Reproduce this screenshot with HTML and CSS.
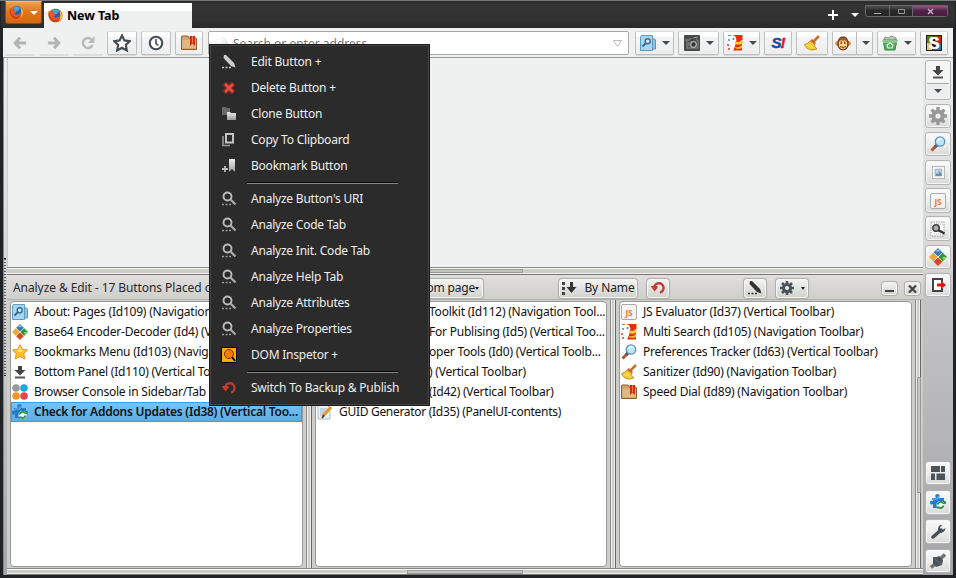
FILE: index.html
```
<!DOCTYPE html>
<html lang="en">
<head>
<meta charset="utf-8">
<title>New Tab</title>
<link rel="stylesheet" href="styles.css">
</head>
<body>
<svg class="defs" width="0" height="0">
<defs>
<linearGradient id="silver" x2="0" y2="1"><stop stop-color="#eee"/><stop offset="1" stop-color="#999"/></linearGradient>
<symbol id="firefox" viewBox="0 0 16 16"><circle cx="8" cy="8" r="7.5" fill="#e8721c"/><circle cx="8.5" cy="6.5" r="5.5" fill="#2560a8"/><path d="M5 2Q9 0 12 3L10 6 7 7 5 5Z" fill="#44a2dc"/><path d="M1 3 3 4 5 3 5 6 8 7 7 9 5 9Q8 12 12 9L14 5Q16 10 13 13 8 17 3 13-1 9 1 3" fill="#e95b1c"/><path d="M12 2Q17 7 14 12L12 13Q14 9 13 6Z" fill="#fbc23e"/><path d="M1 4Q2 10 5 12 9 14 12 11 11 16 5 14 0 11 1 4" fill="#c83a1d"/></symbol>
<symbol id="left" viewBox="0 0 16 16"><path d="M8 2 2.5 8 8 14M3 8H15" fill="none" stroke="#b3b5b5" stroke-width="3.4"/></symbol>
<symbol id="right" viewBox="0 0 16 16"><path d="M8 2 13.5 8 8 14M13 8H1" fill="none" stroke="#b3b5b5" stroke-width="3.4"/></symbol>
<symbol id="reload" viewBox="0 0 16 16"><path d="M11.5 4.5A5 5 0 1 0 12.5 10" fill="none" stroke="#b8b9b9" stroke-width="2.5"/><path d="M14.5 1V8H8Z" fill="#b8b9b9"/></symbol>
<symbol id="staro" viewBox="0 0 16 16"><path d="M8 1.2 10.1 5.7 15 6.3 11.4 9.7 12.3 14.6 8 12.2 3.7 14.6 4.6 9.7 1 6.3 5.9 5.7Z" fill="#fff" stroke="#454c52" stroke-width="1.9"/></symbol>
<symbol id="clock" viewBox="0 0 16 16"><circle cx="8" cy="8" r="6.2" fill="#fff" stroke="#454c52" stroke-width="2.1"/><path d="M8 4V8.5L10.5 10.5" fill="none" stroke="#454c52" stroke-width="1.6"/></symbol>
<symbol id="book" viewBox="0 0 16 16"><path d="M1 1H7L8 3H14Q15.500 3 15.500 4V14.500H.5V2Z" fill="#d4a66e" stroke="#8c5e30"/><path d="M1.500 5H15V13H1.500Z" fill="#dfb983"/><path d="M9 1H14V11L11.500 8.500 9 11Z" fill="#d52b0d"/><path d="M11.500 1V8" stroke="#ff7854"/></symbol>
<symbol id="pages" viewBox="0 0 16 16"><path d="M10 4H14.500Q15.500 4 15.500 6V14H5" fill="#8dc5e4" stroke="#5796bc"/><path d="M1.500.5H12.500V15.500H.5V2Z" fill="#a7d7ef" stroke="#5b9bc2"/><circle cx="7.700" cy="6.200" r="2.500" fill="#d5edf9" stroke="#366b94" stroke-width="1.400"/><path d="M6 8 2.500 11.500" stroke="#366b94" stroke-width="2"/></symbol>
<symbol id="camera" viewBox="0 0 16 16"><rect width="16" height="16" rx="1" fill="#484949"/><path d="M1 5H5L7 3M3 6V13H14V6L12 4" stroke="#7c7e7e" stroke-width="1.300" fill="none"/><circle cx="9.500" cy="9.500" r="2.800" fill="#333" stroke="#aeb0b0" stroke-width="1.300"/><path d="M9 3 14 2M5 7V11" fill="none" stroke="#999"/></symbol>
<symbol id="duck" viewBox="0 0 16 16"><path d="M6 0H15.500V5L13 6 15 8V15.500H5Z" fill="#e62d0c"/><path d="M0 1Q3-1 8 1Q10 4 9 7L8 11 6 16H3L4 11Q0 8 0 1" fill="#fff"/><path d="M8 6Q12 8 15.500 5.500L16 8Q13 11 8 9Z" fill="#ffce38"/><path d="M8 12Q12 13 15 10V13Q11 15 8 13Z" fill="#ffb32b"/><circle cx="2" cy="5" r=".9" fill="#198acb"/><circle cx="6.500" cy="4" r="1" fill="#198acb"/><path d="M1 0H4M0 10H2M1 14H3" stroke="#e63a1d" stroke-width="1.500"/></symbol>
<symbol id="broom" viewBox="0 0 16 16"><path d="M15 1 9.500 6.500" stroke="#bd7435" stroke-width="2.500"/><path d="M8 4 12 8 10 10 7 8 6 6Z" fill="#d65d35"/><path d="M6 6Q4 9 .5 9.500Q2 14.500 8 15L13 14Q10 12 10.500 9Z" fill="#f3ca32" stroke="#c5942c"/><path d="M3 10 6 12M6 9 9 13" stroke="#fff18a"/></symbol>
<symbol id="monkey" viewBox="0 0 16 16"><circle cx="2.500" cy="8.500" r="2.300" fill="#d98d3d"/><circle cx="13.500" cy="8.500" r="2.300" fill="#d98d3d"/><path d="M3 6Q5 1 8 2 11 1 13 6V11Q12 15 8 15 4 15 3 11Z" fill="#a85b22" stroke="#633519"/><path d="M4 7Q6 4 8 6 10 4 12 7V11Q11 14 8 14 5 14 4 11Z" fill="#ffd080"/><path d="M6.200 6.500V9M9.800 6.500V9" stroke="#38271b" stroke-width="1.100"/><path d="M5 11.500Q8 13.500 11 11.500" fill="none" stroke="#6f3e1e"/></symbol>
<symbol id="basket" viewBox="0 0 16 16"><path d="M2 6 3 2 7 3 9 1 14 3V7" fill="#c4cbc5" stroke="#838b86"/><path d="M1 5H15L13 15H3Z" fill="#58a962" stroke="#348c43"/><path d="M1 5H15V8H1Z" fill="#87c68c"/><path d="M6 13 5 10 8 8 11 10 10 13Z" fill="none" stroke="#e2f7e3" stroke-width="1.200"/></symbol>
<symbol id="stylish" viewBox="0 0 16 16"><path d="M0 0H16V16H0Z" fill="#202020"/><path d="M1 1H7V8H1Z" fill="#587e2b"/><path d="M9 1H15V8H9Z" fill="#b32c24"/><path d="M1 8H6V15H1Z" fill="#dec873"/><path d="M10 8H15V15H10Z" fill="#276e99"/></symbol>
<symbol id="bottom" viewBox="0 0 16 16"><path d="M6 2H10V6H13.500L8 11.500 2.500 6H6Z" fill="#444"/><path d="M3 13.500H13" stroke="#555" stroke-width="2"/></symbol>
<symbol id="gear" viewBox="0 0 16 16"><path d="M8 0V16M0 8H16M2.300 2.300 13.700 13.700M2.300 13.700 13.700 2.300" stroke="currentColor" stroke-width="3"/><circle cx="8" cy="8" r="4.200" fill="none" stroke="currentColor" stroke-width="3.300"/><circle cx="8" cy="8" r="2.300" fill="#eee"/></symbol>
<symbol id="lens" viewBox="0 0 16 16"><path d="M7 9 1.500 14.500" stroke="#b85327" stroke-width="3"/><path d="M7 9 5 11" stroke="#525779" stroke-width="3"/><circle cx="10" cy="5.500" r="4.700" fill="#b8e7fb" stroke="#5b91bd" stroke-width="1.300"/><path d="M7.500 5Q9 1.500 12 3" fill="none" stroke="#fff" stroke-width="1.500"/></symbol>
<symbol id="image" viewBox="0 0 16 16"><rect x=".5" y=".5" width="15" height="15" fill="#f6f6f6" stroke="#aaa"/><path d="M4 4H12V12H4Z" fill="#b1d8ec" stroke="#9da5aa"/><path d="M4 12 6 9 8 10 10 7 12 12Z" fill="#5189aa"/><path d="M8 6H10V9H8Z" fill="#dd8e62"/></symbol>
<symbol id="js" viewBox="0 0 16 16"><rect x=".5" y=".5" width="15" height="15" rx="1.500" fill="#f4f4f4" stroke="#aaa"/><text x="8" y="11.500" text-anchor="middle" font-family="Noto Sans" font-weight="700" font-size="8.500" fill="#ee7d12">JS</text></symbol>
<symbol id="scan" viewBox="0 0 16 16"><path d="M1 1H14V15H1Z" fill="#fff" stroke="#999" stroke-dasharray="1.500 1"/><path d="M4 3H13M4 13H13" stroke="#aaa" stroke-dasharray="1 1"/><circle cx="6" cy="7" r="3.300" fill="#aaa" stroke="#444" stroke-width="1.600"/><path d="M8 9 14.500 12.500" stroke="#333" stroke-width="2.500"/></symbol>
<symbol id="colors" viewBox="0 0 16 16"><path d="M8 0 12 4 8 8 4 4Z" fill="#3b78b7"/><path d="M12 4 16 8 12 12 8 8Z" fill="#2e9540"/><path d="M8 8 12 12 8 16 4 12Z" fill="#d9471a"/><path d="M4 4 8 8 4 12 0 8Z" fill="#edaa2f"/><path d="M4 4 12 12M12 4 4 12" stroke="#eee" stroke-width=".8"/><path d="M8 1 10 3H6Z" fill="#9dceeb"/><path d="M12 8H16L13 11Z" fill="#99d370"/></symbol>
<symbol id="exit" viewBox="0 0 16 16"><path d="M12 5V2H3V14H12V11" fill="#fff" stroke="#444" stroke-width="2"/><path d="M7 6.500H11V4L16 8 11 12V9.500H7Z" fill="#f20d0d"/></symbol>
<symbol id="tiles" viewBox="0 0 16 16"><path d="M1 1H10V7H1ZM11 1H15V7H11ZM1 8.500H5V15H1ZM6.500 8.500H15V15H6.500Z" fill="#4c5359"/></symbol>
<symbol id="puzzle" viewBox="0 0 16 16"><path d="M2 4H6Q4 1 7 0 11 0 9 4H14V7Q16 6 16 9 16 11 13 10V14H3V10Q0 12 0 8 0 6 3 7Z" fill="#247ccb"/><path d="M3 5H8V2" fill="none" stroke="#72b7e8"/><circle cx="10.500" cy="11" r="4" fill="#fff"/><path d="M7.500 10.500A3.200 3.200 0 0 1 13 9M13.500 11.500A3.200 3.200 0 0 1 8 13" fill="none" stroke="#21953a" stroke-width="1.800"/><path d="M12 10H15V7ZM10 12.500H7V15Z" fill="#259c3a"/></symbol>
<symbol id="wrench" viewBox="0 0 16 16"><path d="M11 6 3 13" stroke="#454d54" stroke-width="3.500" stroke-linecap="round"/><path d="M10 1Q7 4 8.500 7L11 9Q15 8 15.500 4L12.500 6 10.500 5.500 10 3.500 12 1Z" fill="#454d54"/></symbol>
<symbol id="plug" viewBox="0 0 16 16"><path d="M1 14.500 5.500 10.500M10 6 15 1.500" stroke="#6c7378" stroke-width="3.500"/><path d="M3 4 7 4 9 3 13 7 12 12 9 13 6 14 3 10Z" fill="#495159"/><path d="M4 5 12 12" stroke="#70787e"/></symbol>
<symbol id="star" viewBox="0 0 16 16"><path d="M8 .7 10.300 5.300 15.500 6 11.800 9.700 12.700 15 8 12.500 3.300 15 4.200 9.700.5 6 5.700 5.300Z" fill="#ffc12b" stroke="#e89027"/><path d="M8 2 9.500 6 13.500 7 8 8 3 7 6.500 6Z" fill="#ffe272"/></symbol>
<symbol id="dots" viewBox="0 0 16 16"><circle cx="4" cy="4" r="3.800" fill="#999"/><circle cx="12" cy="4" r="3.800" fill="#19a9dc"/><circle cx="4" cy="12" r="3.800" fill="#f39625"/><circle cx="12" cy="12" r="3.800" fill="#e64455"/></symbol>
<symbol id="note" viewBox="0 0 16 16"><path d="M1 1H10L13 4V15H1Z" fill="#e9f2f9" stroke="#a5bdd2"/><path d="M3 5H10M3 7H10M3 9H9M3 11H7" stroke="#9cb1c3"/><path d="M14 3 6 12" stroke="#e29a25" stroke-width="3"/><path d="M7 11 5 14" stroke="#4e4432" stroke-width="2"/></symbol>
<symbol id="pencil" viewBox="0 0 16 16"><path d="M3 1 5 1 13 9 14.500 13.500 10 12 2.500 4Z" fill="currentColor"/><path d="M1 13.500H3M4.500 13.500H6.500M8 13.500H10" stroke="currentColor" stroke-width="1.500"/></symbol>
<symbol id="delete" viewBox="0 0 16 16"><path d="M3.500 3.500 12.500 12.500M12.500 3.500 3.500 12.500" stroke="#8f2b24" stroke-width="4.600"/><path d="M4 4 12 12M12 4 4 12" stroke="#e64b3f" stroke-width="2.500"/></symbol>
<symbol id="clone" viewBox="0 0 16 16"><path d="M1 1H5L6 2H9V9H1Z" fill="#696969"/><path d="M6 6H9L10 7H15V14H6Z" fill="url(#silver)"/></symbol>
<symbol id="copy" viewBox="0 0 16 16"><path d="M5 2H12V10.500H5Z" fill="none" stroke="#c4c4c4" stroke-width="2"/><path d="M2 4V13.500H9" fill="none" stroke="#999" stroke-width="1.600"/></symbol>
<symbol id="bookmark" viewBox="0 0 16 16"><path d="M8 1H14V14L11 11 8 14Z" fill="url(#silver)"/><path d="M1 11H7M4 8V14" stroke="#bbb" stroke-width="1.800"/></symbol>
<symbol id="analyze" viewBox="0 0 16 16"><circle cx="6.500" cy="5.500" r="4" fill="none" stroke="#bbb" stroke-width="1.900"/><path d="M9.500 8.500 14.500 13.500" stroke="#aaa" stroke-width="2.300"/><path d="M1 13.500H3M4.500 13.500H6.500M8 13.500H10" stroke="#999" stroke-width="1.400"/></symbol>
<symbol id="dom" viewBox="0 0 16 16"><path d="M.5.500H15.500V15.500H.5Z" fill="#ffad00" stroke="#000"/><circle cx="8" cy="7" r="4.500" fill="#ff7800" stroke="#743500"/><path d="M11 10 14 14" stroke="#000" stroke-width="2"/></symbol>
<symbol id="undo" viewBox="0 0 16 16"><path d="M4.200 7.500A4.700 4.700 0 1 1 10 12.500" fill="none" stroke="#b93c2e" stroke-width="2.400"/><path d="M.5 6H7.500V8L4.500 11.500Z" fill="#cd3b2b"/></symbol>
<symbol id="sort" viewBox="0 0 18 16"><path d="M1 2H4V5H1ZM1 7H4V10H1ZM1 12H4V15H1Z" fill="#444"/><path d="M9 2H12V7H15.500L10.500 13 5.500 7H9Z" fill="#333"/></symbol>
</defs></svg>
<div class="window">
<header class="titlebar">
  <button class="app"><svg class="i15"><use href="#firefox"/></svg><i class="caret white"></i></button>
  <div class="tab"><svg class="i15"><use href="#firefox"/></svg><b>New Tab</b></div>
  <div class="newtab"><svg width="12" height="12"><path d="M6 1V11M1 6H11" stroke="#fff" stroke-width="2"/></svg></div>
  <i class="caret white tabs"></i>
  <div class="controls"><span><svg width="7" height="7"><path d="M0 5.500H7" stroke="#aaa"/></svg></span><span><svg width="7" height="7"><path d="M.5 1.500H6.500V5.500H.5Z" fill="none" stroke="#999" /></svg></span><span class="close"><svg width="7" height="7"><path d="M1 1 6 6M6 1 1 6" stroke="#c5b4be" stroke-width="1.400"/></svg></span></div>
</header>
<nav class="nav">
  <button class="tb flat back"><svg><use href="#left"/></svg></button>
  <button class="tb flat fwd"><svg><use href="#right"/></svg></button>
  <button class="tb flat rel"><svg><use href="#reload"/></svg></button>
  <button class="tb w30"><svg class="i17"><use href="#staro"/></svg></button>
  <button class="tb w30"><svg><use href="#clock"/></svg></button>
  <button class="tb w28"><svg><use href="#book"/></svg></button>
  <div class="url"><i class="globe"></i><span>Search or enter address</span><svg class="drop" width="9" height="8"><path d="M.5.500H8.500L4.500 6.500Z" fill="#fff" stroke="#bbb"/></svg></div>
  <button class="tb m6 w39"><svg><use href="#pages"/></svg><i class="caret"></i></button>
  <button class="tb m4 w41"><svg><use href="#camera"/></svg><i class="caret"></i></button>
  <button class="tb m4 w37"><svg><use href="#duck"/></svg><i class="caret"></i></button>
  <button class="tb m4 w28"><span class="s-logo">S<em>!</em></span></button>
  <button class="tb m4 w32"><svg><use href="#broom"/></svg></button>
  <button class="tb m4 w41 split"><svg><use href="#monkey"/></svg><i class="bar"></i><i class="caret"></i></button>
  <button class="tb m4 w39"><svg><use href="#basket"/></svg><i class="caret"></i></button>
  <button class="tb m4 w28"><svg viewBox="0 0 16 16"><use href="#stylish"/><text x="8" y="14" class="stylish-s">S</text></svg></button>
</nav>
<div class="body">
  <div class="grip"><i></i></div>
  <main>
    <div class="page"></div>
    <div class="hsplit"><i></i></div>
    <section class="panel">
      <div class="head"><div class="title">Analyze &amp; Edit - 17 Buttons Placed on</div>
        <button class="pb from"><span>From page</span><i class="tiny"></i></button>
        <button class="pb sort"><svg class="i18"><use href="#sort"/></svg><span>By Name</span></button>
        <button class="pb undo"><svg><use href="#undo"/></svg></button>
        <button class="pb pencil"><svg><use href="#pencil"/></svg></button>
        <button class="pb cog"><svg><use href="#gear"/></svg><i class="tiny"></i></button>
        <button class="pb min"><svg><path d="M0 7H9" stroke="#444" stroke-width="2"/></svg></button>
        <button class="pb cls"><svg><path d="M1 1.500 8 8.500M8 1.500 1 8.500" stroke="#444" stroke-width="2.300"/></svg></button>
      </div>
      <div class="lists">
        <ul>
          <li><svg><use href="#pages"/></svg><span>About: Pages (Id109) (Navigation Tool...</span></li>
          <li><svg><use href="#colors"/></svg><span>Base64 Encoder-Decoder (Id4) (Vertic...</span></li>
          <li><svg><use href="#star"/></svg><span>Bookmarks Menu (Id103) (Navigation...</span></li>
          <li><svg><use href="#bottom"/></svg><span>Bottom Panel (Id110) (Vertical Toolbar)</span></li>
          <li><svg><use href="#dots"/></svg><span>Browser Console in Sidebar/Tab (Id...</span></li>
          <li class="sel"><svg><use href="#puzzle"/></svg><span>Check for Addons Updates (Id38) (Vertical Too...</span></li>
        </ul>
        <div class="vsplit"></div>
        <ul class="middle">
          <li><span>Toolkit (Id112) (Navigation Tool...</span></li>
          <li><span>For Publising (Id5) (Vertical Too...</span></li>
          <li><span>oper Tools (Id0) (Vertical Toolb...</span></li>
          <li><span>) (Vertical Toolbar)</span></li>
          <li><span>(Id42) (Vertical Toolbar)</span></li>
          <li class="full"><svg><use href="#note"/></svg><span>GUID Generator (Id35) (PanelUI-contents)</span></li>
        </ul>
        <div class="vsplit"></div>
        <ul>
          <li><svg><use href="#js"/></svg><span>JS Evaluator (Id37) (Vertical Toolbar)</span></li>
          <li><svg><use href="#duck"/></svg><span>Multi Search (Id105) (Navigation Toolbar)</span></li>
          <li><svg><use href="#lens"/></svg><span>Preferences Tracker (Id63) (Vertical Toolbar)</span></li>
          <li><svg><use href="#broom"/></svg><span>Sanitizer (Id90) (Navigation Toolbar)</span></li>
          <li><svg><use href="#book"/></svg><span>Speed Dial (Id89) (Navigation Toolbar)</span></li>
        </ul>
        <div class="vsplit last"><i></i></div>
      </div>
      <div class="hsplit foot"><i></i></div>
    </section>
  </main>
  <aside>
    <button class="sb duo"><svg><use href="#bottom"/></svg><i class="caret"></i></button>
    <button class="sb"><svg class="grey i18"><use href="#gear"/></svg></button>
    <button class="sb"><svg><use href="#lens"/></svg></button>
    <button class="sb"><svg class="i13"><use href="#image"/></svg></button>
    <button class="sb"><svg><use href="#js"/></svg></button>
    <button class="sb"><svg><use href="#scan"/></svg></button>
    <button class="sb"><svg class="i18"><use href="#colors"/></svg></button>
    <button class="sb"><svg><use href="#exit"/></svg></button>
    <div class="grow"></div>
    <button class="sb low"><svg><use href="#tiles"/></svg></button>
    <button class="sb low"><svg><use href="#puzzle"/></svg></button>
    <button class="sb low"><svg><use href="#wrench"/></svg></button>
    <button class="sb low"><svg><use href="#plug"/></svg></button>
  </aside>
</div>
</div>
<div class="menu">
  <div class="mi"><svg class="light"><use href="#pencil"/></svg><span>Edit Button +</span></div>
  <div class="mi"><svg><use href="#delete"/></svg><span>Delete Button +</span></div>
  <div class="mi"><svg><use href="#clone"/></svg><span>Clone Button</span></div>
  <div class="mi"><svg><use href="#copy"/></svg><span>Copy To Clipboard</span></div>
  <div class="mi"><svg><use href="#bookmark"/></svg><span>Bookmark Button</span></div>
  <hr>
  <div class="mi"><svg><use href="#analyze"/></svg><span>Analyze Button's URI</span></div>
  <div class="mi"><svg><use href="#analyze"/></svg><span>Analyze Code Tab</span></div>
  <div class="mi"><svg><use href="#analyze"/></svg><span>Analyze Init. Code Tab</span></div>
  <div class="mi"><svg><use href="#analyze"/></svg><span>Analyze Help Tab</span></div>
  <div class="mi"><svg><use href="#analyze"/></svg><span>Analyze Attributes</span></div>
  <div class="mi"><svg><use href="#analyze"/></svg><span>Analyze Properties</span></div>
  <div class="mi"><svg><use href="#dom"/></svg><span>DOM Inspetor +</span></div>
  <hr>
  <div class="mi"><svg><use href="#undo"/></svg><span>Switch To Backup &amp; Publish</span></div>
</div>
</body>
</html>
```
FILE: styles.css
```
* { box-sizing: border-box; }
body { margin: 0; width: 956px; height: 578px; overflow: hidden; background: #202224; font: 12px/20px "Noto Sans", "Open Sans", sans-serif; color: #111; letter-spacing: -.22px; }
.defs { position: absolute; }
button { font: inherit; letter-spacing: inherit; color: inherit; padding: 0; margin: 0; border: 0; }
svg { flex: none; display: block; }
.tb svg, .sb svg, .pb svg, li svg, .mi svg { width: 16px; height: 16px; }
.window { width: 956px; height: 578px; padding: 0 3px 3px; border-top: 1px solid #777; background: #202326; display: flex; flex-direction: column; }
.titlebar { height: 27px; flex: none; display: flex; background: linear-gradient(#2c2c2c, #343434 20%, #313131 70%, #292929); margin: 0 -2px; padding-left: 4px; }
.app { width: 37px; height: 23px; display: flex; align-items: center; justify-content: space-between; padding: 0 3px; background: linear-gradient(#eda04f, #df741c 50%, #d8670f); border: 1px solid #8b4b19; border-top-color: #f5bd80; border-radius: 0 0 3px 3px; }
.i15 { width: 15px; height: 15px; }
.tab { margin: 2px 0 0 2px; width: 148px; height: 25px; background: linear-gradient(#fff, #fff 30%, #eff0f0 32%); display: flex; align-items: center; padding-left: 4px; gap: 4px; font-size: 12.500px; letter-spacing: -.1px; color: #000; }
.newtab { margin: 8px 0 0 auto; }
.caret { border: 4px solid transparent; border-top: 4px solid #444b52; border-bottom: 0; flex: none; }
.caret.white { border-top-color: #fff; }
.tabs { margin: 12px 6px 0 12px; }
.controls { display: flex; height: 12px; margin: 4px 7px 0 0; border: 1px solid #666; border-radius: 0 0 3px 3px; background: linear-gradient(#505050, #2a2a2a 45%, #262626); }
.controls span { width: 24px; display: flex; align-items: center; justify-content: center; border-right: 1px solid #666; }
.controls span:nth-child(2) { width: 23px; }
.controls .close { width: 34px; border: 0; background: linear-gradient(#98548a, #51244a 45%, #461d40); }
.nav { height: 30px; flex: none; background: #eff0f0; border-bottom: 1px solid #999; display: flex; align-items: center; padding: 1px 5px 0 5px; }
.tb { height: 24px; flex: none; display: flex; align-items: center; justify-content: center; gap: 6px; border: 1px solid #bfbfc0; border-top-color: #ddd; border-radius: 2px; background: linear-gradient(#fff, #fff 20%, #f4f4f4 25%, #ededee); margin-right: 4px; box-shadow: 0 1px 0 #ddd; }
.tb.flat { width: 30px; border-color: #eff0f0; border-bottom-color: #ddd; background: #eff0f0; }
.tb.back svg, .tb.fwd svg { width: 14px; height: 14px; }
.back { margin-left: -3px; }
.tb .i17 { width: 18px; height: 18px; }
.w30 { width: 30px; } .w28 { width: 28px; } .w32 { width: 32px; } .w37 { width: 37px; } .w39 { width: 39px; } .w41 { width: 41px; }
.nav .m4, .nav .m6 { margin-right: 0; margin-left: 4px; }
.nav .m6 { margin-left: 6px; }
.url { flex: 1; margin-left: 1px; height: 24px; min-width: 0; border: 1px solid #aaa; border-radius: 2px; background: #fff; display: flex; align-items: center; color: #777; padding: 1px 6px 0; font-size: 12px; letter-spacing: 0; }
.globe { width: 13px; height: 13px; border-radius: 50%; background: radial-gradient(circle at 35% 25%, #fff, #e2e4e4 70%); margin-right: 5px; }
.drop { margin-left: auto; }
.s-logo { font: italic 900 15px/16px "Liberation Sans", sans-serif; color: #174b99; letter-spacing: -1px; -webkit-text-stroke: .5px; } .s-logo em { color: #e51212; }
.bar { width: 1px; height: 22px; background: #bbb; }
.split { gap: 5px; }
.stylish-s { font: 900 16px "Liberation Sans", sans-serif; fill: #fff; stroke: #fff; stroke-width: .6px; text-anchor: middle; }
.body { flex: 1; min-height: 0; display: flex; }
.grip { width: 4px; background: linear-gradient(#eceded, #d7d7d8 40%, #a6a6a8); padding-top: 200px; border-left: 1px solid #888; }
.grip i { display: block; width: 2px; height: 118px; border-top: 1px solid #222; border-bottom: 1px solid #222; background: repeating-linear-gradient(#555 0 1px, transparent 1px 3px); }
main { width: 916px; flex: none; display: flex; flex-direction: column; background: #cdcdca; }
.page { height: 209px; flex: none; background: #eff0f0; border-left: 1px solid #ccc; }
.hsplit { height: 8px; flex: none; background: #cdcdca; border-top: 1px solid #888; border-bottom: 1px solid #777; box-shadow: inset 0 1px #f7f7f5, inset 0 -1px #eeeeec; display: flex; align-items: center; justify-content: center; }
.hsplit i { width: 116px; height: 4px; border: 1px solid #999; background: #c3c3c0; }
.panel { flex: 1; display: flex; flex-direction: column; }
.head { height: 25px; flex: none; display: flex; align-items: center; background: linear-gradient(#e1dfde, #cfcfcc); border-bottom: 1px solid #b0b0ae; padding: 2px 3px 0 6px; }
.title { width: 210px; white-space: nowrap; overflow: hidden; color: #292929; letter-spacing: -.08px; }
.pb { flex: none; height: 19px; display: flex; align-items: center; justify-content: center; background: linear-gradient(#f2f2f1, #d2d2cf); border: 1px solid #f6f6f4; border-radius: 3px; box-shadow: 0 0 1px 1px #aaa; letter-spacing: 0; color: #222; }
.tiny { border: 2.500px solid transparent; border-top: 3px solid #222; border-bottom: 0; }
.from { margin-left: 181px; width: 79px; justify-content: flex-end; padding-right: 3px; gap: 0; letter-spacing: -.2px; }
.sort { margin-left: 76px; width: 78px; gap: 5px; letter-spacing: -.1px; } .pb .i18 { width: 18px; height: 16px; }
.undo { margin-left: 10px; width: 22px; } .pencil { margin-left: 75px; width: 22px; color: #333; }
.cog { margin-left: 10px; width: 32px; gap: 7px; } .cog svg { color: #4c545b; width: 14px; height: 14px; }
.min { margin-left: auto; width: 15px; height: 13px; } .cls { margin-left: 8px; width: 15px; height: 13px; }
.pb.min svg, .pb.cls svg { width: 9px; height: 9px; }
.pb.cog svg { width: 14px; height: 14px; }
.lists { flex: 1; min-height: 0; display: flex; padding: 1px 0 1px 3px; }
ul { width: 293px; flex: none; list-style: none; margin: 0; padding: 0; background: #fff; border: 1px solid #999; border-radius: 4px; overflow: hidden; }
ul.middle { width: 292px; }
li { height: 20px; padding: 0 2px 0 1px; display: flex; align-items: center; gap: 6px; white-space: nowrap; color: #111; }
li.sel { font-weight: 600; background: linear-gradient(#7bc2f4, #55aee9); border: 1px solid #3a9de2; letter-spacing: -.26px; padding-left: 0; }
.middle li:not(.full) { padding-left: 113px; }
.middle li.full { padding-left: 1px; letter-spacing: -.3px; }
.vsplit { width: 12px; flex: none; margin: -1px 0; background: linear-gradient(90deg, #cdcdca 0 3px, #888 3px 4px, #eee 4px 5px, #cdcdca 5px 7px, #eee 7px 8px, #666 8px 9px, #cdcdca 9px); }
.vsplit.last { width: 11px; padding: 77px 0 0 5px; }
.vsplit.last i { display: block; width: 4px; height: 116px; border: 1px solid #999; background: #c7c7c4; }
.hsplit.foot { height: 7px; }
aside { width: 30px; flex: none; padding: 2px 2px 2px; background: linear-gradient(#eceded, #d8d6d5 40%, #c5c5c8 45%, #a5a5a8); display: flex; flex-direction: column; gap: 3.700px; }
.sb { width: 26px; height: 24.500px; flex: none; display: flex; align-items: center; justify-content: center; border: 1px solid #b4b4b4; border-radius: 3px; background: linear-gradient(#fbfbfb, #ededed 50%, #d9d9da); box-shadow: inset 0 0 0 1px #f5f5f5; }
.sb.duo { height: 40px; flex-direction: column; justify-content: space-between; padding: 3px 0 6px; background: linear-gradient(#f5f5f5 0 22px, #aaa 22px 23px, #eee 23px); }
.sb .i18 { width: 18px; height: 18px; } .sb .i13 { width: 13px; height: 13px; }
.grey { color: #999; } .grow { flex: 1; } .low + .low { margin-top: 1px; }
.menu { position: absolute; left: 209px; top: 44px; width: 221px; height: 362px; padding: 4px 11px; background: #2b2b2b; border: 1px solid #191919; outline: 1px solid #444; outline-offset: -2px; color: #eee; letter-spacing: -.22px; }
.mi { height: 26px; display: flex; align-items: center; gap: 14px; white-space: nowrap; }
.mi .light { color: #ccc; }
.menu hr { margin: 3px 20px 2px 26px; height: 2px; border: 0; background: linear-gradient(#070707 50%, #888 50%); }
```
